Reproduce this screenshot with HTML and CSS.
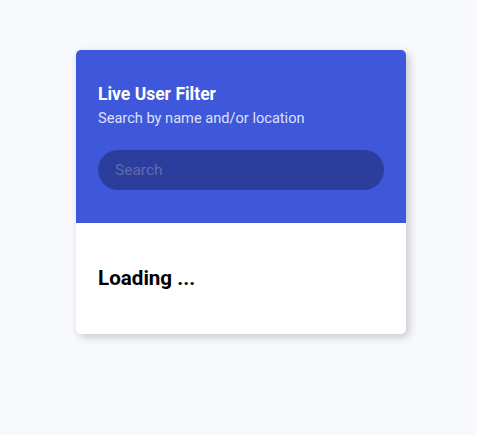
FILE: index.html
```html
<!DOCTYPE html>
<html>
<head>
<meta charset="utf-8">
<link rel="stylesheet" href="styles.css">
</head>
<body>
<div class="page">
  <div class="card">
    <header class="header">
      <h4 class="title">Live User Filter</h4>
      <p class="subtitle">Search by name and/or location</p>
      <input class="search" type="text" placeholder="Search">
    </header>
    <div class="body">
      <h3 class="loading">Loading ...</h3>
    </div>
  </div>
</div>
</body>
</html>
```
FILE: styles.css
```css
* { box-sizing: border-box; }
html, body { margin: 0; padding: 0; }
body {
  background: #f8f9fd;
  font-family: Roboto, "Liberation Sans", sans-serif;
  height: 435px;
}
.page {
  display: flex;
  justify-content: flex-start;
  padding: 50px 0 0 76px;
}
.card {
  width: 330px;
  border-radius: 5px;
  overflow: hidden;
  background: #fff;
  box-shadow: 3px 3px 10px rgba(0, 0, 0, 0.2);
}
.header {
  background: #3e57db;
  color: #fff;
  padding: 33px 22px 33px;
}
.title {
  margin: 0;
  font-size: 17.5px;
  font-weight: 700;
  line-height: 22px;
}
.subtitle {
  margin: 4px 0 0;
  font-size: 14.6px;
  line-height: 19px;
  color: #dde1f9;
}
.search {
  display: block;
  margin-top: 22px;
  width: 100%;
  height: 40px;
  border: none;
  border-radius: 50px;
  background: #2b3e9d;
  padding: 0 17px;
  font-family: Roboto, "Liberation Sans", sans-serif;
  font-size: 15.5px;
  color: #fff;
  outline: none;
}
.search::placeholder { color: #5f6bab; }
.body {
  height: 111px;
  padding: 0 22px 2px;
  display: flex;
  align-items: center;
}
.loading {
  margin: 0;
  font-size: 20.6px;
  font-weight: 700;
  color: #000;
}
```
